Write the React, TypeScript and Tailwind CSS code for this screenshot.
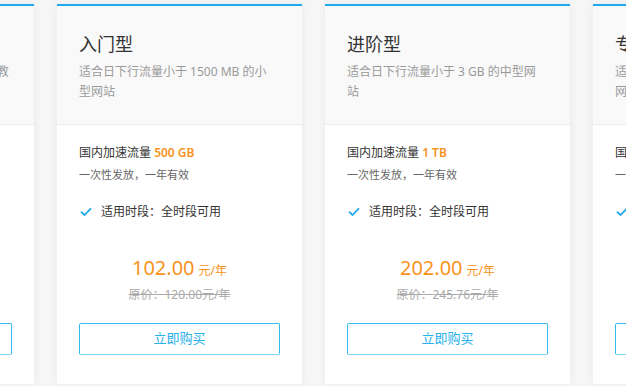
import React from 'react';

type Plan = {
  name: string;
  desc: string[];
  traffic: string;
  price: string;
  original: string;
};

const plans: Plan[] = [
  { name: '体验型', desc: ['适合日下行流量小于 50 MB 的个人教', '育网站'], traffic: '100 GB', price: '25.00', original: '30.00' },
  { name: '入门型', desc: ['适合日下行流量小于 1500 MB 的小', '型网站'], traffic: '500 GB', price: '102.00', original: '120.00' },
  { name: '进阶型', desc: ['适合日下行流量小于 3 GB 的中型网', '站'], traffic: '1 TB', price: '202.00', original: '245.76' },
  { name: '专业型', desc: ['适合日下行流量小于 10 GB 的大型', '网站'], traffic: '3 TB', price: '588.00', original: '737.28' },
];

function Check() {
  return (
    <svg width="12" height="10" viewBox="0 0 12 10" fill="none">
      <path d="M1.5 5.2 L4.6 8 L10.5 1.8" stroke="#1fa8ec" strokeWidth="1.8" strokeLinecap="round" strokeLinejoin="round" />
    </svg>
  );
}

function Card({ plan }: { plan: Plan }) {
  return (
    <div className="w-[245px] shrink-0 bg-white border-t-2 border-[#1eaaf1] shadow-[0_0_8px_rgba(0,0,0,0.06)]">
      <div className="bg-[#f9f9f9] border-b border-[#ececec] px-[22px] pt-[25px] pb-[22px]">
        <div className="text-[18px] leading-[26px] text-[#333]">{plan.name}</div>
        <div className="mt-[5px] text-[12px] leading-[20px] text-[#999] whitespace-nowrap">
          {plan.desc.map((line) => (
            <div key={line}>{line}</div>
          ))}
        </div>
      </div>
      <div className="px-[22px] pt-[18px] pb-[29px]">
        <div className="text-[12px] leading-[20px] text-[#333]">
          国内加速流量 <span className="text-[#f7931e] font-semibold">{plan.traffic}</span>
        </div>
        <div className="mt-[2px] text-[11px] leading-[20px] text-[#666]">一次性发放，一年有效</div>
        <div className="mt-[17px] flex items-center gap-[9px] pl-[1px] text-[12px] leading-[20px] text-[#333]">
          <Check />
          <span>适用时段：全时段可用</span>
        </div>
        <div className="mt-[32px] text-center leading-[28px] text-[#f7931e]">
          <span className="text-[20px]">{plan.price}</span>
          <span className="text-[12px] ml-1">元/年</span>
        </div>
        <div className="text-center text-[12px] leading-[20px] text-[#aaa] line-through">
          原价：{plan.original}元/年
        </div>
        <button className="mt-[18px] w-full h-[32px] border border-[#33bbf0] border-b-[#7fd3f5] rounded-[2px] text-[13px] text-[#29b1ee] bg-white">
          立即购买
        </button>
      </div>
    </div>
  );
}

export default function App() {
  return (
    <div
      className="w-[626px] h-[386px] overflow-hidden bg-[#f6f6f6] pt-[4px]"
      style={{ fontFamily: '"Noto Sans", "Noto Sans CJK SC", sans-serif' }}
    >
      <div className="flex gap-[23px] -ml-[211px]">
        {plans.map((p) => (
          <Card key={p.name} plan={p} />
        ))}
      </div>
    </div>
  );
}
